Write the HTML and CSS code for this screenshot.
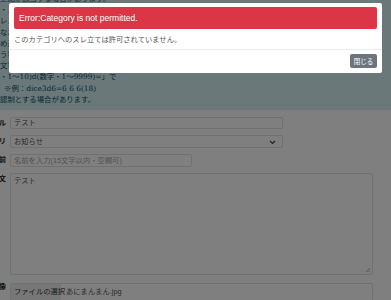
FILE: index.html
```html
<!DOCTYPE html>
<html lang="ja">
<head>
  <meta charset="UTF-8" />
  <meta name="viewport" content="width=device-width, initial-scale=1.0"/>
  <title>スレ立て</title>
  <link rel="stylesheet" href="styles.css">
</head>
<body>

  <!-- Notice box (scrolled) -->
  <div class="notice">
    <p class="first">上記が該当する場合があります。</p>
    <p>・スレッド作成時の注意</p>
    <p>レスの削除依頼について</p>
    <p>なお、画像の投稿について</p>
    <p>め込みについて</p>
    <p>う場合があります</p>
    <p>文字数の制限について</p>
    <p>・1～10)d(数字・1～9999)=」で</p>
    <p><span class="indent">※例：dice3d6=6 6 6(18)</span></p>
    <p>認制とする場合があります。</p>
  </div>

  <!-- Post form -->
  <form class="post-form">
    <div class="row">
      <div class="label"><span>タイトル</span></div>
      <div class="field field-wide">テスト</div>
    </div>
    <div class="row">
      <div class="label"><span>カテゴリ</span></div>
      <div class="field field-wide select">お知らせ
        <svg class="chevron" width="7" height="5" viewBox="0 0 7 5"><path d="M1 1l2.5 2.5L6 1" fill="none" stroke="#444" stroke-width="1.2"/></svg>
      </div>
    </div>
    <div class="row">
      <div class="label"><span>名前</span></div>
      <div class="field field-name placeholder">名前を入力(15文字以内・空欄可)</div>
    </div>
    <div class="row">
      <div class="label"><span>本文</span></div>
      <div class="field field-text">テスト
        <svg class="grip" width="6" height="6" viewBox="0 0 6 6"><path d="M5 1L1 5M5 3.5L3.5 5" stroke="#999" stroke-width="0.8"/></svg>
      </div>
    </div>
    <div class="row">
      <div class="label"><span>画像</span></div>
      <div class="field field-file"><span class="file-btn">ファイルの選択</span>あにまんまん.jpg</div>
    </div>
  </form>

  <!-- Modal -->
  <div class="backdrop"></div>
  <div class="modal">
    <div class="modal-body">
      <div class="alert">Error:Category is not permitted.</div>
      <p class="message">このカテゴリへのスレ立ては許可されていません。</p>
    </div>
    <div class="modal-footer">
      <button class="btn-close" type="button">閉じる</button>
    </div>
  </div>

</body>
</html>
```

FILE: styles.css
```css
body {
  margin: 0;
  font-family: "Liberation Sans", "Noto Sans CJK JP", sans-serif;
  font-size: 7.3px;
  color: #333;
  background: #fff;
  overflow: hidden;
}

.notice {
  box-sizing: border-box;
  height: 110px;
  background-color: #d4f0f3;
  color: #0e4f68;
  font-family: "DejaVu Serif", "Noto Sans CJK JP", serif;
  font-size: 7.4px;
  line-height: 11.2px;
  overflow: hidden;
}

.notice p {
  margin: 0;
  white-space: nowrap;
}

.notice .first {
  margin-top: -7px;
}

.notice .indent {
  margin-left: 4px;
}

.post-form {
  padding-top: 7px;
}

.row {
  display: flex;
  align-items: flex-start;
  margin-bottom: 6px;
}

.label {
  width: 6px;
  margin-right: 4px;
  display: flex;
  justify-content: flex-end;
  overflow: hidden;
  white-space: nowrap;
  font-weight: bold;
  color: #222;
  line-height: 12px;
}

.field {
  position: relative;
  box-sizing: border-box;
  height: 12px;
  line-height: 10px;
  padding: 0 3px;
  border: 1px solid #e2e2e2;
  border-radius: 2px;
  color: #555;
  white-space: nowrap;
}

.field-wide {
  width: 273px;
}

.select {
  height: 13px;
  line-height: 11px;
}

.chevron {
  position: absolute;
  right: 6px;
  top: 4px;
}

.field-name {
  width: 182px;
  height: 13px;
  line-height: 11px;
}

.placeholder {
  color: #a8a8a8;
}

.field-text {
  width: 363px;
  height: 102px;
  line-height: 13px;
}

.grip {
  position: absolute;
  right: 1px;
  bottom: 1px;
}

.field-file {
  width: 363px;
  height: 18px;
  line-height: 16px;
  padding: 0;
  margin-top: 2px;
}

.file-btn {
  display: inline-block;
  background-color: #efefef;
  color: #333;
  padding: 0 3px;
  margin-right: 5px;
  width: 44px;
}

.backdrop {
  position: fixed;
  top: 0;
  left: 0;
  right: 0;
  bottom: 0;
  background: rgba(0, 0, 0, 0.5);
}

.modal {
  position: fixed;
  top: 3px;
  left: 9px;
  width: 373px;
  background: #fff;
  border-radius: 2px;
}

.modal-body {
  padding: 4px 5px 0;
}

.alert {
  background-color: #dc3545;
  color: #fff;
  height: 22px;
  line-height: 22px;
  padding: 0 5px;
  border-radius: 2px;
  font-size: 8.5px;
}

.message {
  margin: 0;
  line-height: 20px;
  color: #555;
  font-family: "Noto Sans CJK JP", sans-serif;
}

.modal-footer {
  border-top: 1px solid #e9ecef;
  padding: 4px 5px 5px;
  display: flex;
  justify-content: flex-end;
}

.btn-close {
  width: 27px;
  height: 14px;
  padding: 0;
  border: none;
  border-radius: 2px;
  background-color: #6c757d;
  color: #fff;
  font-family: "Noto Sans CJK JP", sans-serif;
  font-size: 6.5px;
}
```
